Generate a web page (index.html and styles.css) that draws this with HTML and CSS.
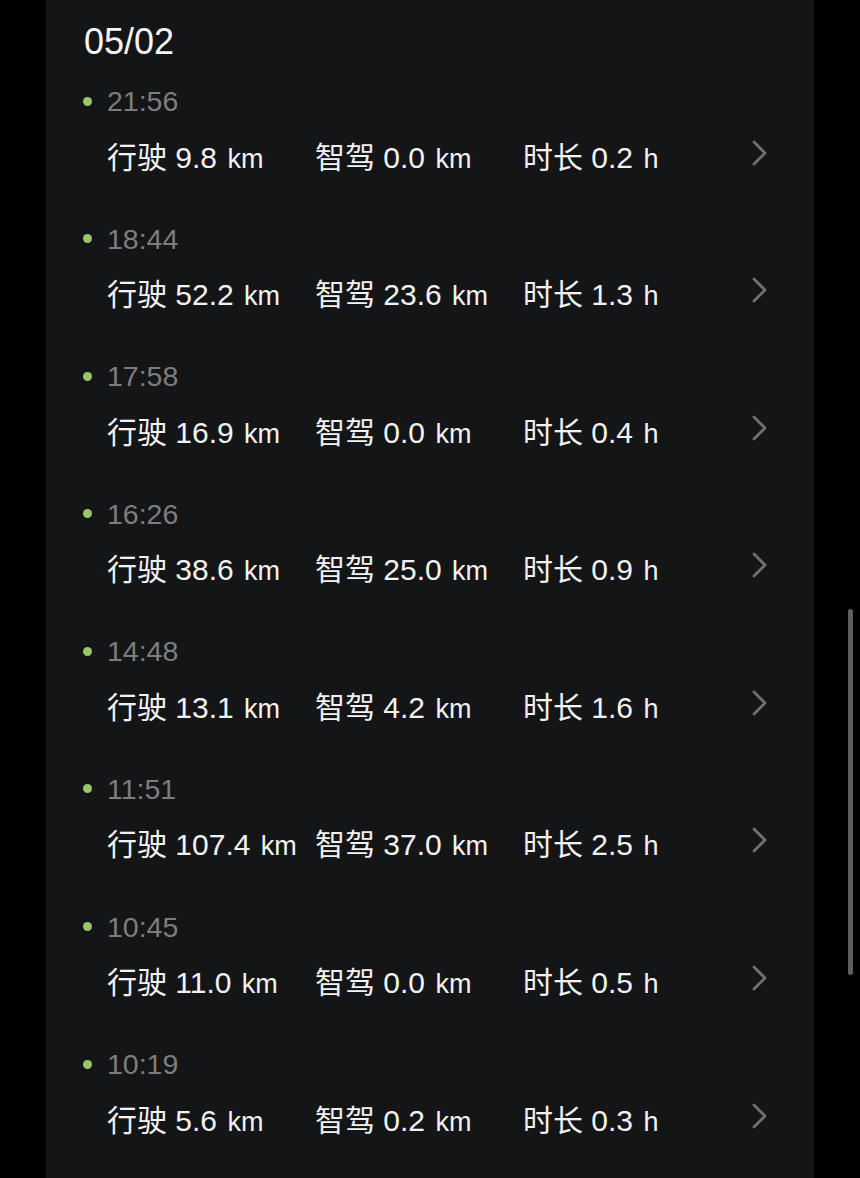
FILE: index.html
```html
<!DOCTYPE html>
<html lang="zh-CN">

<head>
    <meta charset="UTF-8">
    <meta name="viewport" content="width=device-width, initial-scale=1.0">
    <title>行程记录</title>
    <link rel="stylesheet" href="styles.css">
</head>

<body>
    <div class="card">
        <h2 class="date">05/02</h2>

        <div class="trip">
            <div class="trip-time"><span class="dot"></span>21:56</div>
            <div class="trip-data">
                <span class="stat">行驶 9.8 <small>km</small></span>
                <span class="stat">智驾 0.0 <small>km</small></span>
                <span class="stat">时长 0.2 <small>h</small></span>
                <svg class="chevron" viewBox="0 0 16 26"><path d="M2 2 L13 13 L2 24" /></svg>
            </div>
        </div>

        <div class="trip">
            <div class="trip-time"><span class="dot"></span>18:44</div>
            <div class="trip-data">
                <span class="stat">行驶 52.2 <small>km</small></span>
                <span class="stat">智驾 23.6 <small>km</small></span>
                <span class="stat">时长 1.3 <small>h</small></span>
                <svg class="chevron" viewBox="0 0 16 26"><path d="M2 2 L13 13 L2 24" /></svg>
            </div>
        </div>

        <div class="trip">
            <div class="trip-time"><span class="dot"></span>17:58</div>
            <div class="trip-data">
                <span class="stat">行驶 16.9 <small>km</small></span>
                <span class="stat">智驾 0.0 <small>km</small></span>
                <span class="stat">时长 0.4 <small>h</small></span>
                <svg class="chevron" viewBox="0 0 16 26"><path d="M2 2 L13 13 L2 24" /></svg>
            </div>
        </div>

        <div class="trip">
            <div class="trip-time"><span class="dot"></span>16:26</div>
            <div class="trip-data">
                <span class="stat">行驶 38.6 <small>km</small></span>
                <span class="stat">智驾 25.0 <small>km</small></span>
                <span class="stat">时长 0.9 <small>h</small></span>
                <svg class="chevron" viewBox="0 0 16 26"><path d="M2 2 L13 13 L2 24" /></svg>
            </div>
        </div>

        <div class="trip">
            <div class="trip-time"><span class="dot"></span>14:48</div>
            <div class="trip-data">
                <span class="stat">行驶 13.1 <small>km</small></span>
                <span class="stat">智驾 4.2 <small>km</small></span>
                <span class="stat">时长 1.6 <small>h</small></span>
                <svg class="chevron" viewBox="0 0 16 26"><path d="M2 2 L13 13 L2 24" /></svg>
            </div>
        </div>

        <div class="trip">
            <div class="trip-time"><span class="dot"></span>11:51</div>
            <div class="trip-data">
                <span class="stat">行驶 107.4 <small>km</small></span>
                <span class="stat">智驾 37.0 <small>km</small></span>
                <span class="stat">时长 2.5 <small>h</small></span>
                <svg class="chevron" viewBox="0 0 16 26"><path d="M2 2 L13 13 L2 24" /></svg>
            </div>
        </div>

        <div class="trip">
            <div class="trip-time"><span class="dot"></span>10:45</div>
            <div class="trip-data">
                <span class="stat">行驶 11.0 <small>km</small></span>
                <span class="stat">智驾 0.0 <small>km</small></span>
                <span class="stat">时长 0.5 <small>h</small></span>
                <svg class="chevron" viewBox="0 0 16 26"><path d="M2 2 L13 13 L2 24" /></svg>
            </div>
        </div>

        <div class="trip">
            <div class="trip-time"><span class="dot"></span>10:19</div>
            <div class="trip-data">
                <span class="stat">行驶 5.6 <small>km</small></span>
                <span class="stat">智驾 0.2 <small>km</small></span>
                <span class="stat">时长 0.3 <small>h</small></span>
                <svg class="chevron" viewBox="0 0 16 26"><path d="M2 2 L13 13 L2 24" /></svg>
            </div>
        </div>
    </div>

    <div class="scrollbar"></div>
</body>

</html>
```

FILE: styles.css
```css
body {
    margin: 0;
    background-color: #000;
    font-family: "Liberation Sans", "Noto Sans CJK SC", sans-serif;
    color: #f2f2f2;
    height: 1178px;
    overflow: hidden;
}

.card {
    width: 768px;
    margin-left: 46px;
    min-height: 1178px;
    padding: 22px 0 0 38px;
    box-sizing: border-box;
    background-color: #141517;
}

.date {
    margin: 0;
    font-size: 36px;
    font-weight: normal;
    line-height: 40px;
    color: #f5f5f5;
}

.trip {
    padding-top: 21px;
    padding-bottom: 21.6px;
}

.trip-time {
    display: flex;
    align-items: center;
    height: 36px;
    font-size: 28.5px;
    line-height: 36px;
    color: #7d7d7d;
}

.dot {
    width: 9px;
    height: 9px;
    border-radius: 50%;
    background-color: #9cc468;
    margin-left: -1px;
    margin-right: 15px;
}

.trip-data {
    display: flex;
    align-items: center;
    height: 40px;
    margin-top: 19px;
    padding-left: 23px;
    font-size: 30px;
    line-height: 40px;
}

.stat {
    width: 208px;
    white-space: nowrap;
}

.stat small {
    margin-left: 2px;
    font-size: 27px;
}

.chevron {
    width: 16px;
    height: 26px;
    margin-left: auto;
    margin-right: 46px;
    margin-bottom: 11px;
    fill: none;
    stroke: #717171;
    stroke-width: 2.8;
    stroke-linecap: round;
    stroke-linejoin: round;
}

.scrollbar {
    position: fixed;
    left: 848px;
    top: 609px;
    width: 5px;
    height: 366px;
    border-radius: 3px;
    background-color: #5f5f5f;
}
```
